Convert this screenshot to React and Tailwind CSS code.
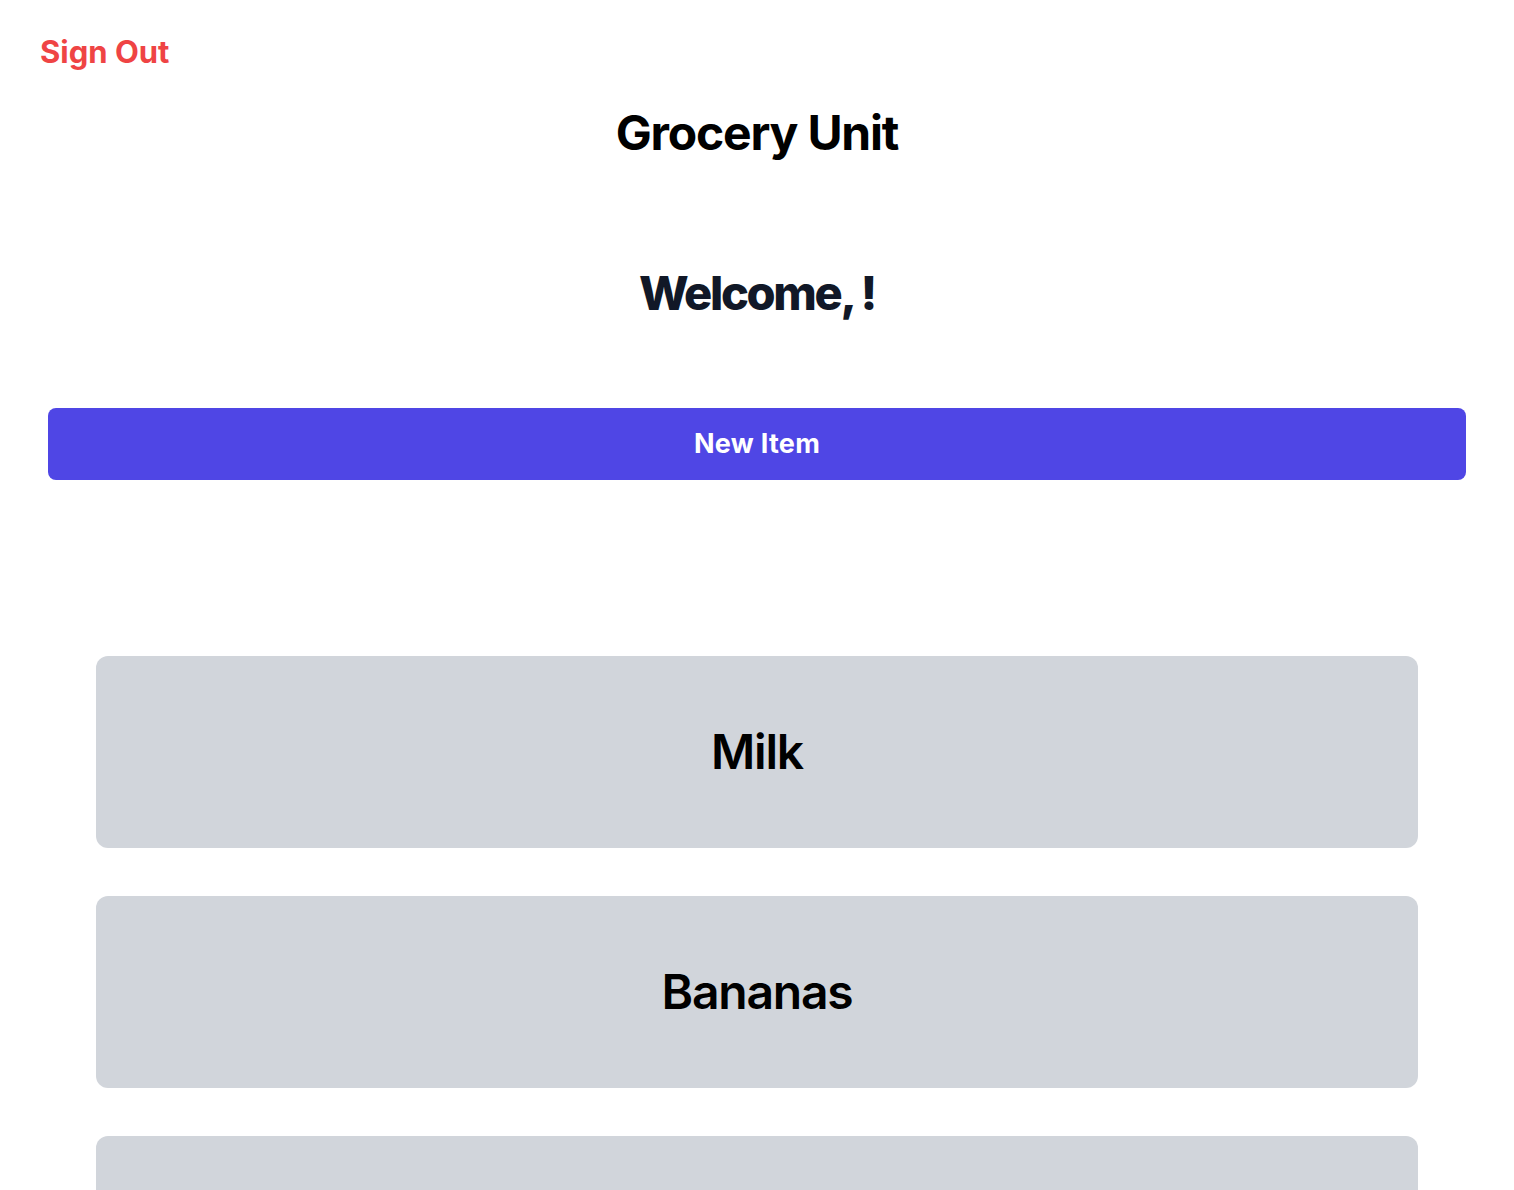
export default function App() {
  const items = ["Milk", "Bananas", "Eggs"];
  return (
    <div className="min-h-screen bg-white" style={{ fontFamily: "Inter, 'Noto Sans', sans-serif" }}>
      <div className="pl-10 pt-[34px]">
        <button className="text-[31px] font-bold text-[#ef4444] leading-9">Sign Out</button>
      </div>
      <h1 className="mt-[39px] text-center text-5xl leading-none font-bold text-black tracking-tight">Grocery Unit</h1>
      <h2 className="mt-[112px] text-center text-[47px] leading-[48px] font-extrabold text-[#111827] tracking-tighter">Welcome, !</h2>
      <div className="px-12 mt-[91px]">
        <button className="w-full h-[72px] rounded-lg bg-[#4f46e5] text-white text-[27px] font-bold tracking-[0.01em]">New Item</button>
      </div>
      <div className="px-24 mt-[176px] flex flex-col gap-12">
        {items.map((it) => (
          <div key={it} className="h-48 rounded-xl bg-[#d1d5db] flex items-center justify-center">
            <span className="text-5xl leading-none font-semibold text-black tracking-tight">{it}</span>
          </div>
        ))}
      </div>
    </div>
  );
}
